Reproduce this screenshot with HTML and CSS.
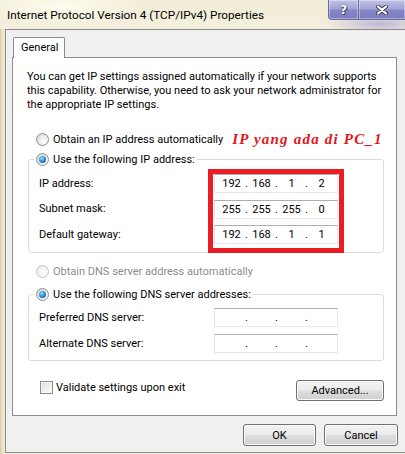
FILE: index.html
```html
<!DOCTYPE html>
<html>
<head>
<meta charset="utf-8">
<link rel="stylesheet" href="styles.css">
</head>
<body>
<div class="window">
  <div class="titlebar">
    <div class="title">Internet Protocol Version 4 (TCP/IPv4) Properties</div>
    <div class="caption-btns">
      <div class="cbtn help">?</div>
      <div class="cbtn close">
        <svg width="12" height="10" viewBox="0 0 12 10"><path d="M2 1.5 L10 8.5 M10 1.5 L2 8.5" stroke="#3a3a5a" stroke-width="4" stroke-linecap="round"/><path d="M2 1.5 L10 8.5 M10 1.5 L2 8.5" stroke="#fff" stroke-width="2.2" stroke-linecap="round"/></svg>
      </div>
    </div>
  </div>
  <div class="client">
    <div class="tabs"><div class="tab">General</div></div>
    <div class="panel">
      <p class="intro">You can get IP settings assigned automatically if your network supports this capability. Otherwise, you need to ask your network administrator for the appropriate IP settings.</p>

      <div class="radio-row top">
        <span class="radio"></span><span>Obtain an IP address automatically</span>
        <span class="note">IP yang ada di PC_1</span>
      </div>

      <fieldset class="group ip-group">
        <legend class="radio-row"><span class="radio checked"></span><span>Use the following IP address:</span></legend>
        <div class="fields ip-fields">
          <label>IP address:</label>
          <div class="ipbox"><span class="oct">192</span><span class="dot">.</span><span class="oct">168</span><span class="dot">.</span><span class="oct">1</span><span class="dot">.</span><span class="oct">2</span></div>
          <label>Subnet mask:</label>
          <div class="ipbox"><span class="oct">255</span><span class="dot">.</span><span class="oct">255</span><span class="dot">.</span><span class="oct">255</span><span class="dot">.</span><span class="oct">0</span></div>
          <label>Default gateway:</label>
          <div class="ipbox"><span class="oct">192</span><span class="dot">.</span><span class="oct">168</span><span class="dot">.</span><span class="oct">1</span><span class="dot">.</span><span class="oct">1</span></div>
          <div class="redbox"></div>
        </div>
      </fieldset>

      <div class="radio-row disabled dns-auto">
        <span class="radio"></span><span>Obtain DNS server address automatically</span>
      </div>

      <fieldset class="group dns-group">
        <legend class="radio-row"><span class="radio checked"></span><span>Use the following DNS server addresses:</span></legend>
        <div class="fields dns-fields">
          <label>Preferred DNS server:</label>
          <div class="ipbox"><span class="oct"></span><span class="dot">.</span><span class="oct"></span><span class="dot">.</span><span class="oct"></span><span class="dot">.</span><span class="oct"></span></div>
          <label>Alternate DNS server:</label>
          <div class="ipbox"><span class="oct"></span><span class="dot">.</span><span class="oct"></span><span class="dot">.</span><span class="oct"></span><span class="dot">.</span><span class="oct"></span></div>
        </div>
      </fieldset>

      <div class="bottom-row">
        <div class="check-row"><span class="checkbox"></span><span>Validate settings upon exit</span></div>
        <div class="btn adv">Advanced...</div>
      </div>
    </div>
    <div class="dialog-btns">
      <div class="btn ok">OK</div>
      <div class="btn cancel">Cancel</div>
    </div>
  </div>
</div>
</body>
</html>
```

FILE: styles.css
```css
* { box-sizing: border-box; }
html, body { margin: 0; padding: 0; }
body {
  width: 405px;
  height: 454px;
  overflow: hidden;
  font-family: Roboto, "Noto Sans", sans-serif;
  font-size: 11px;
  color: #000;
  background: #efe9d2;
}
.window {
  height: 454px;
  display: flex;
  flex-direction: column;
  background: linear-gradient(to right, #d6caa4 0, #e9e1c5 2px, #f1ecd8 5px);
}
.titlebar {
  height: 29px;
  flex: none;
  display: flex;
  justify-content: space-between;
  align-items: flex-start;
  background:
    radial-gradient(ellipse 55px 12px at 380px 24px, rgba(130, 118, 210, 0.45), rgba(130, 118, 210, 0) 100%),
    radial-gradient(ellipse 90px 20px at 60px 6px, rgba(255, 253, 240, 0.9), rgba(255, 253, 240, 0) 100%),
    linear-gradient(#f1ecd6, #f4f0de);
}
.title {
  padding-left: 7px;
  line-height: 30px;
  font-size: 11.75px;
  color: #000;
}
.caption-btns {
  display: flex;
  height: 20px;
  width: 77px;
  flex: none;
}
.cbtn {
  height: 20px;
  display: flex;
  align-items: center;
  justify-content: center;
  border: 1px solid #6c6e98;
  border-top: none;
  background: linear-gradient(#c2c3e6 0%, #a3a4d8 45%, #8485c6 55%, #7c7ec2 100%);
  box-shadow: inset 0 0 0 1px rgba(255, 255, 255, 0.35);
}
.help {
  width: 30px;
  border-radius: 0 0 0 4px;
  border-right: none;
  color: #fff;
  font-family: "DejaVu Sans", sans-serif;
  font-weight: bold;
  font-size: 13px;
  text-shadow: 0 0 1px #33335a, 0 0 1px #33335a, 1px 1px 0 #44446a;
  padding-bottom: 1px;
}
.close {
  width: 47px;
  border-right: none;
}
.client {
  flex: none;
  margin-left: 5px;
  width: 410px;
  height: 424px;
  border: 1px solid #8a8a8a;
  border-right: none;
  background: #f0f0f0;
  padding: 7px 0 0 6px;
}
.tabs {
  display: flex;
  padding-left: 1px;
}
.tab {
  position: relative;
  z-index: 1;
  width: 52px;
  height: 21px;
  margin-bottom: -1px;
  border: 1px solid #898c95;
  border-bottom: none;
  border-radius: 2px 2px 0 0;
  background: #fff;
  padding-left: 7px;
  line-height: 19px;
}
.panel {
  width: 385px;
  height: 359px;
  border: 1px solid #898c95;
  background: #fff;
  padding-top: 12px;
}
.intro {
  margin: 0 0 0 14px;
  width: 368px;
  line-height: 14px;
}
.radio-row {
  display: flex;
  align-items: center;
  gap: 4px;
  height: 16px;
  white-space: nowrap;
}
.radio-row > span { flex: none; }
.radio-row.top {
  margin: 19px 0 0 23px;
}
.radio {
  width: 13px;
  height: 13px;
  flex: none;
  border-radius: 50%;
  border: 1px solid #8e8f8f;
  background: radial-gradient(circle at 65% 65%, #ffffff 0%, #f0f0f0 35%, #cfcfcf 100%);
  position: relative;
}
.radio.checked::after {
  content: "";
  position: absolute;
  left: 2px;
  top: 2px;
  width: 7px;
  height: 7px;
  border-radius: 50%;
  background: radial-gradient(circle at 40% 35%, #a6e0ff 0%, #3a9be0 40%, #125b9e 80%, #0d3f70 100%);
}
.radio-row.disabled { color: #8d8d8d; }
.radio-row.disabled .radio {
  border-color: #c6c6c6;
  background: radial-gradient(circle at 65% 65%, #ffffff 0%, #f6f6f6 40%, #e4e4e4 100%);
}
.note {
  margin-left: 5px;
  font-family: "Liberation Serif", serif;
  font-weight: bold;
  font-style: italic;
  font-size: 15px;
  letter-spacing: 1.2px;
  color: #e3151c;
}
.group {
  margin: 0 12px 0 15px;
  border: 1px solid #d5dfe5;
  border-radius: 3px;
  padding: 0 0 8px 5px;
  min-width: 0;
}
.group legend {
  padding: 0 2px;
  margin: 0;
}
.ip-group { margin-top: 4px; }
.dns-group { margin-top: 7px; padding-bottom: 7px; }
.fields {
  position: relative;
  display: grid;
  grid-template-columns: 175px 124px;
  align-items: center;
  margin-left: 5px;
}
.ip-fields { padding-top: 7px; row-gap: 6.5px; }
.dns-fields { padding-top: 6px; row-gap: 7px; }
.fields label { line-height: 14px; }
.ipbox {
  height: 19px;
  display: flex;
  align-items: center;
  padding-left: 5px;
  border: 1px solid;
  border-color: #abadb3 #e3e9ef #e3e9ef #e2e3ea;
  background: #fff;
}
.oct { width: 23px; text-align: center; }
.dot { width: 7px; text-align: center; }
.redbox {
  position: absolute;
  left: 169px;
  top: 2px;
  width: 136px;
  height: 84px;
  border: 5px solid #ec1c24;
}
.dns-auto { margin: 10px 0 0 23px; }
.bottom-row {
  display: flex;
  justify-content: space-between;
  align-items: flex-start;
  margin-top: 19px;
  padding: 0 12px 0 27px;
}
.check-row {
  display: flex;
  align-items: center;
  gap: 3px;
  height: 14px;
}
.checkbox {
  width: 13px;
  height: 13px;
  border: 1px solid #8e8f8f;
  background: linear-gradient(135deg, #dcdcdc 0%, #f4f4f4 70%, #ffffff 100%);
  box-shadow: inset 0 0 0 1px #f4f4f4;
}
.btn {
  height: 22px;
  display: flex;
  align-items: center;
  justify-content: center;
  border: 1px solid #707070;
  border-radius: 3px;
  background: linear-gradient(#f2f2f2 0%, #ebebeb 48%, #dddddd 52%, #cfcfcf 100%);
  box-shadow: inset 0 0 0 1px #fbfbfb;
}
.adv { width: 88px; height: 21px; }
.dialog-btns {
  width: 386px;
  display: flex;
  justify-content: flex-end;
  gap: 8px;
  margin-top: 8px;
}
.ok { width: 73px; }
.cancel { width: 74px; }
```
